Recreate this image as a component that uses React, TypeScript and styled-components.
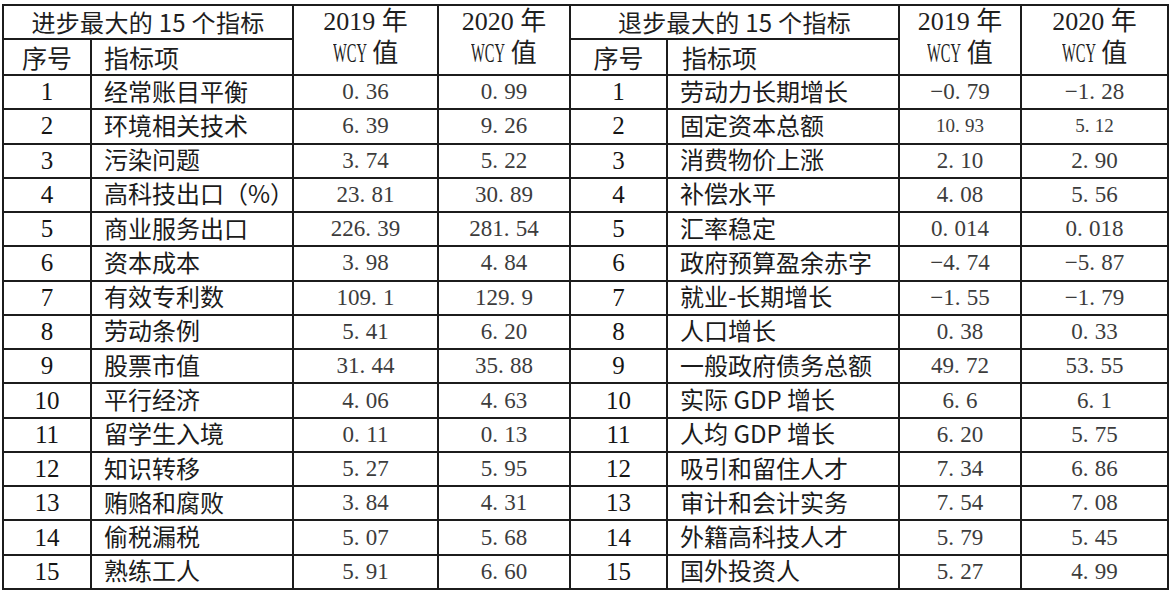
import React from "react";
import styled, { createGlobalStyle } from "styled-components";

const GlobalStyle = createGlobalStyle`
  html, body {
    margin: 0;
    padding: 0;
    background: #ffffff;
  }
`;

const CJK = `"Noto Sans CJK SC", "Noto Sans", sans-serif`;
const SERIF = `"Liberation Serif", "Noto Sans CJK SC", serif`;

const Page = styled.div`
  padding: 4px 0 0 2px;
  width: 1174px;
  height: 596px;
  box-sizing: border-box;
`;

const Grid = styled.table`
  border-collapse: collapse;
  table-layout: fixed;
  width: 1167px;
  color: #161616;

  th,
  td {
    border: 2px solid #1c1c1c;
    padding: 0;
    vertical-align: middle;
    white-space: nowrap;
    line-height: 26px;
  }
`;

const Col = styled.col<{ $w: number }>`
  width: ${(p) => p.$w}px;
`;

const Row = styled.tr<{ $h: number }>`
  height: ${(p) => p.$h}px;
`;

const TitleCell = styled.th`
  font-family: ${CJK};
  font-weight: 400;
  font-size: 24px;
  letter-spacing: 0.3px;
  text-align: center;
  color: #1e1e1e;
`;

const YearCell = styled.th`
  font-family: ${SERIF};
  font-weight: 400;
  font-size: 26px;
  text-align: center;
  color: #1e1e1e;
  && {
    line-height: 31px;
    padding-bottom: 5px;
  }
`;

const Wcy = styled.span`
  display: inline-block;
  font-size: 28px;
  transform: scaleX(0.52);
  transform-origin: left center;
  margin-right: -26px;
`;

const HeadCell = styled.th<{ $align: "left" | "center"; $pad?: number }>`
  font-family: ${CJK};
  font-weight: 400;
  font-size: 25px;
  text-align: ${(p) => p.$align};
  color: #1e1e1e;
  && {
    padding-left: ${(p) => p.$pad ?? 0}px;
  }
`;

const IndexCell = styled.td`
  text-align: center;
  font-family: ${SERIF};
  font-size: 25px;
  color: #151515;
`;

const NameCell = styled.td<{ $pad: number }>`
  font-family: ${CJK};
  font-size: 24px;
  color: #1b1b1b;
  && {
    padding-left: ${(p) => p.$pad}px;
    padding-bottom: 3px;
  }
`;

const ValueCell = styled.td<{ $small?: boolean }>`
  text-align: center;
  font-family: ${SERIF};
  font-size: ${(p) => (p.$small ? 19 : 23)}px;
  color: #3c3c3c;
`;

const Dot = styled.span`
  margin-right: 0.28em;
`;

function Value({ v }: { v: string }) {
  const [intPart, frac] = v.split(".");
  return (
    <>
      {intPart}
      {frac !== undefined && (
        <>
          <Dot>.</Dot>
          {frac}
        </>
      )}
    </>
  );
}

type Item = { name: string; a: string; b: string; small?: boolean };

const left: Item[] = [
  { name: "经常账目平衡", a: "0.36", b: "0.99" },
  { name: "环境相关技术", a: "6.39", b: "9.26" },
  { name: "污染问题", a: "3.74", b: "5.22" },
  { name: "高科技出口（%）", a: "23.81", b: "30.89" },
  { name: "商业服务出口", a: "226.39", b: "281.54" },
  { name: "资本成本", a: "3.98", b: "4.84" },
  { name: "有效专利数", a: "109.1", b: "129.9" },
  { name: "劳动条例", a: "5.41", b: "6.20" },
  { name: "股票市值", a: "31.44", b: "35.88" },
  { name: "平行经济", a: "4.06", b: "4.63" },
  { name: "留学生入境", a: "0.11", b: "0.13" },
  { name: "知识转移", a: "5.27", b: "5.95" },
  { name: "贿赂和腐败", a: "3.84", b: "4.31" },
  { name: "偷税漏税", a: "5.07", b: "5.68" },
  { name: "熟练工人", a: "5.91", b: "6.60" },
];

const right: Item[] = [
  { name: "劳动力长期增长", a: "−0.79", b: "−1.28" },
  { name: "固定资本总额", a: "10.93", b: "5.12", small: true },
  { name: "消费物价上涨", a: "2.10", b: "2.90" },
  { name: "补偿水平", a: "4.08", b: "5.56" },
  { name: "汇率稳定", a: "0.014", b: "0.018" },
  { name: "政府预算盈余赤字", a: "−4.74", b: "−5.87" },
  { name: "就业-长期增长", a: "−1.55", b: "−1.79" },
  { name: "人口增长", a: "0.38", b: "0.33" },
  { name: "一般政府债务总额", a: "49.72", b: "53.55" },
  { name: "实际 GDP 增长", a: "6.6", b: "6.1" },
  { name: "人均 GDP 增长", a: "6.20", b: "5.75" },
  { name: "吸引和留住人才", a: "7.34", b: "6.86" },
  { name: "审计和会计实务", a: "7.54", b: "7.08" },
  { name: "外籍高科技人才", a: "5.79", b: "5.45" },
  { name: "国外投资人", a: "5.27", b: "4.99" },
];

const widths = [88, 202, 145, 132, 97, 232, 122, 147];

function YearHead({ year }: { year: string }) {
  return (
    <YearCell rowSpan={2}>
      {year} 年
      <br />
      <Wcy>WCY</Wcy>值
    </YearCell>
  );
}

export default function App() {
  return (
    <>
      <GlobalStyle />
      <Page>
        <Grid>
          <colgroup>
            {widths.map((w, i) => (
              <Col key={i} $w={w} />
            ))}
          </colgroup>
          <thead>
            <Row $h={34}>
              <TitleCell colSpan={2}>进步最大的 15 个指标</TitleCell>
              <YearHead year="2019" />
              <YearHead year="2020" />
              <TitleCell colSpan={2}>退步最大的 15 个指标</TitleCell>
              <YearHead year="2019" />
              <YearHead year="2020" />
            </Row>
            <Row $h={35}>
              <HeadCell $align="center">序号</HeadCell>
              <HeadCell $align="left" $pad={12}>
                指标项
              </HeadCell>
              <HeadCell $align="center">序号</HeadCell>
              <HeadCell $align="left" $pad={14}>
                指标项
              </HeadCell>
            </Row>
          </thead>
          <tbody>
            {left.map((l, i) => {
              const r = right[i];
              return (
                <Row $h={34.27} key={i}>
                  <IndexCell>{i + 1}</IndexCell>
                  <NameCell $pad={12}>{l.name}</NameCell>
                  <ValueCell $small={l.small}>
                    <Value v={l.a} />
                  </ValueCell>
                  <ValueCell $small={l.small}>
                    <Value v={l.b} />
                  </ValueCell>
                  <IndexCell>{i + 1}</IndexCell>
                  <NameCell $pad={12}>{r.name}</NameCell>
                  <ValueCell $small={r.small}>
                    <Value v={r.a} />
                  </ValueCell>
                  <ValueCell $small={r.small}>
                    <Value v={r.b} />
                  </ValueCell>
                </Row>
              );
            })}
          </tbody>
        </Grid>
      </Page>
    </>
  );
}
